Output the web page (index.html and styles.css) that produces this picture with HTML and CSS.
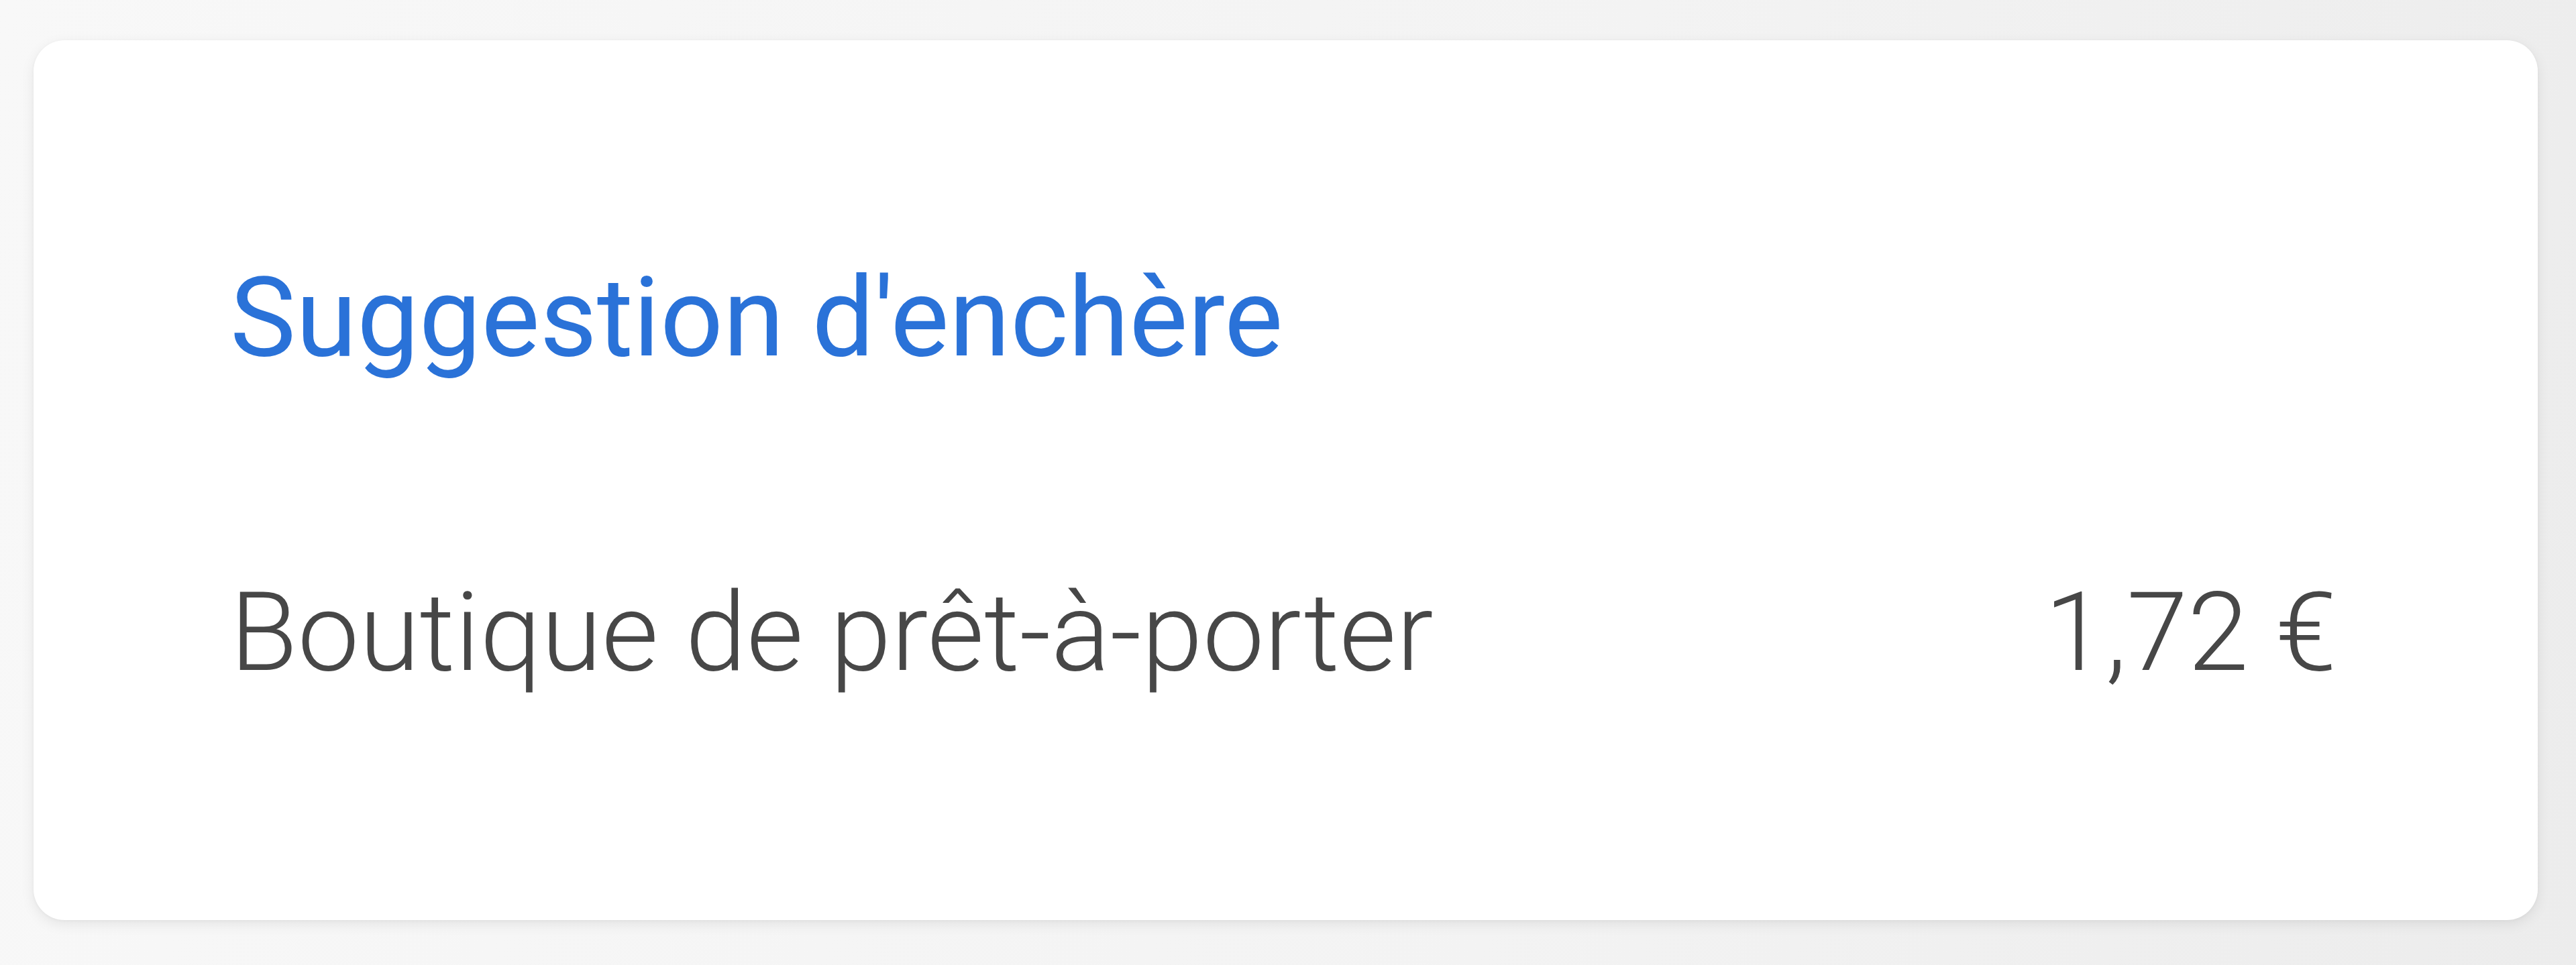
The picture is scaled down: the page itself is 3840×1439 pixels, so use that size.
FILE: index.html
```html
<!DOCTYPE html>
<html lang="fr">
<head>
<meta charset="utf-8">
<link rel="stylesheet" href="styles.css">
</head>
<body>
<div class="page">
  <section class="card">
    <h2 class="title">Suggestion d'enchère</h2>
    <div class="row">
      <span class="label">Boutique de prêt-à-porter</span>
      <span class="value">1,72 €</span>
    </div>
  </section>
</div>
</body>
</html>
```
FILE: styles.css
```css
html, body {
  margin: 0;
  padding: 0;
}
body {
  width: 3840px;
  height: 1439px;
  overflow: hidden;
  background: linear-gradient(100deg, #f8f8f8 0%, #f3f3f3 60%, #ececec 100%);
  font-family: Roboto, "Liberation Sans", sans-serif;
}
.page {
  padding: 60px 57px 0 50px;
}
.card {
  box-sizing: border-box;
  height: 1312px;
  background: #ffffff;
  border-radius: 46px;
  box-shadow: 0 6px 20px rgba(0, 0, 0, 0.08), 0 1px 4px rgba(0, 0, 0, 0.04);
  padding: 314px 300px 0 293px;
  display: flex;
  flex-direction: column;
}
.title {
  margin: 0;
  font-size: 165px;
  line-height: 200px;
  font-weight: 400;
  color: #2a72d8;
}
.row {
  margin-top: 269px;
  display: flex;
  justify-content: space-between;
  align-items: baseline;
  font-size: 164px;
  line-height: 200px;
  font-weight: 300;
  color: #474747;
}
```
